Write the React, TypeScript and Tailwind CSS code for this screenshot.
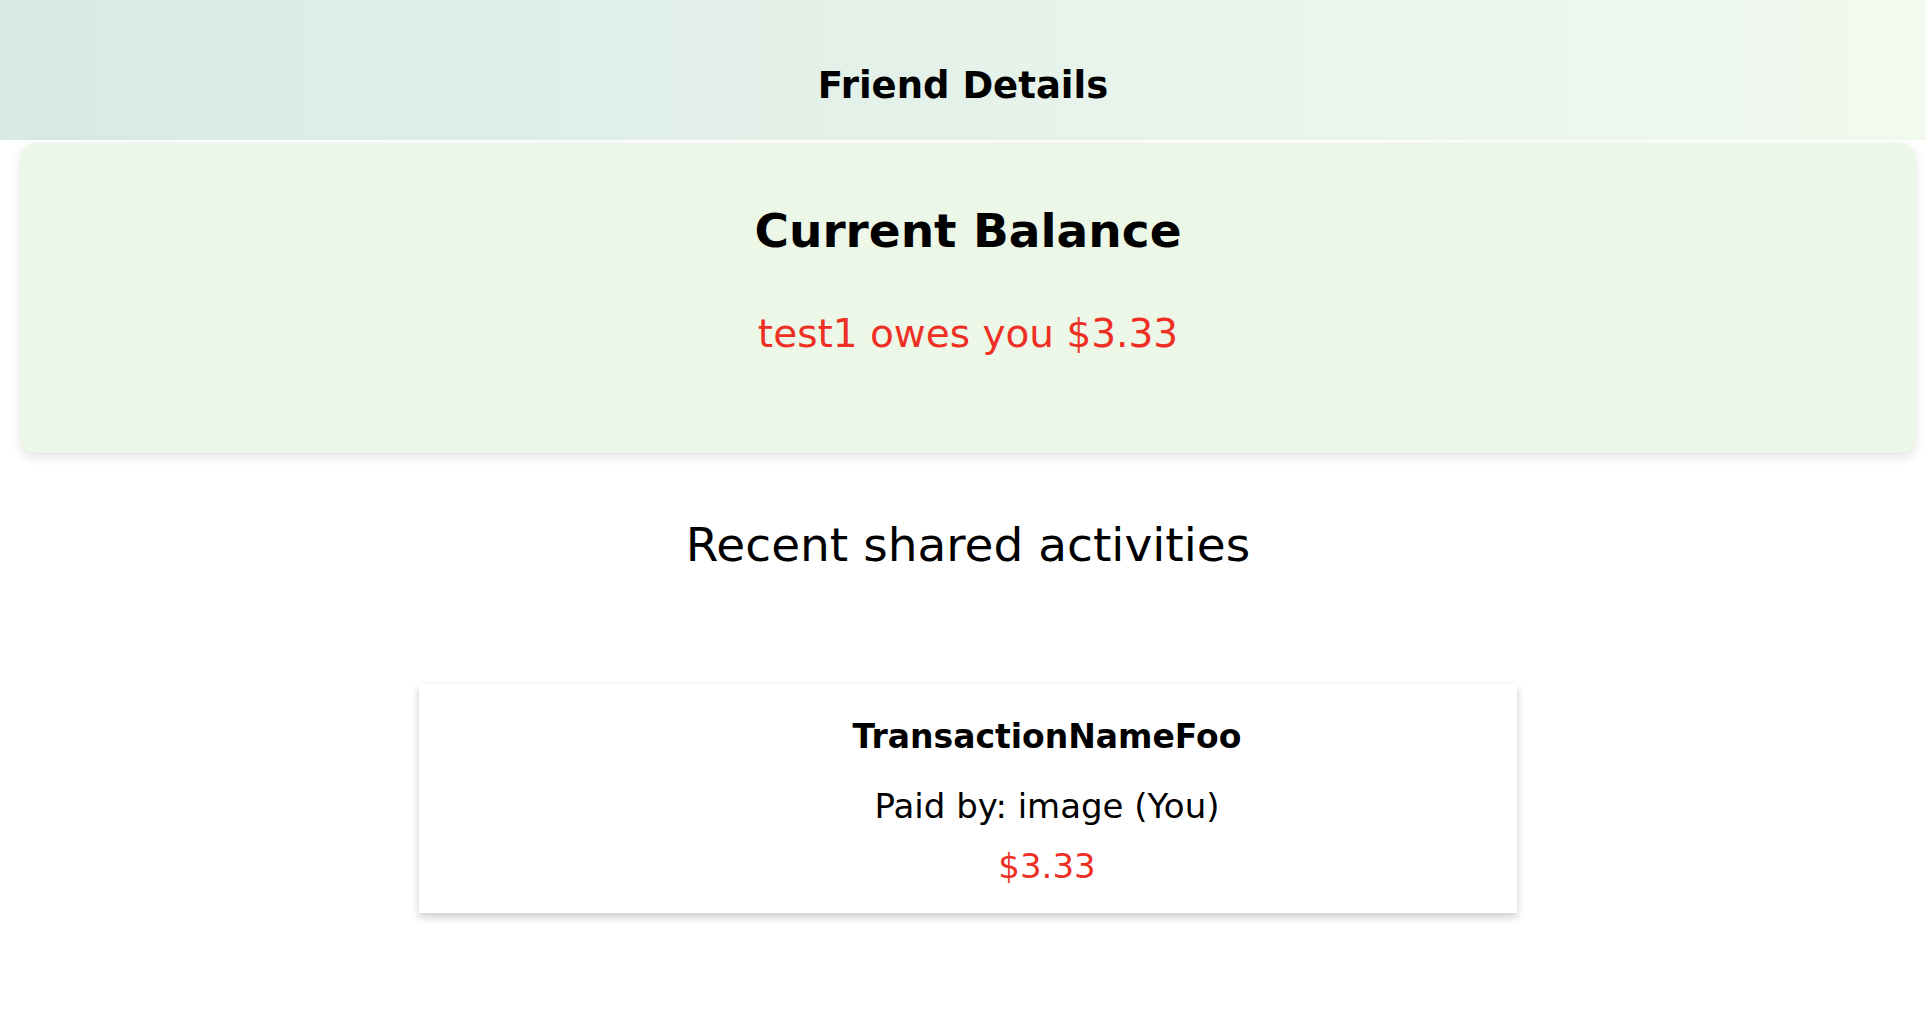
const font = { fontFamily: "'DejaVu Sans', 'Noto Sans', sans-serif" };

function Header() {
  return (
    <header className="flex h-[140px] items-center justify-center bg-gradient-to-r from-[#d8eae5] to-[#f2faef] pt-[30px]">
      <h1 className="text-[37px] font-bold leading-none text-black">Friend Details</h1>
    </header>
  );
}

function BalanceCard() {
  return (
    <section className="mx-[11px] mt-[3px] rounded-[14px] bg-[#edf7e7] pb-[100px] pt-[64px] text-center shadow-[0_4px_12px_rgba(0,0,0,0.12)]">
      <h2 className="text-[47px] font-bold leading-none text-black">Current Balance</h2>
      <p className="mt-[60px] text-[39px] leading-none text-[#ee3024]">
        test1 owes you $3.33
      </p>
    </section>
  );
}

function ActivityCard() {
  return (
    <div className="mx-auto w-[1098px] bg-white pb-[30px] pl-[158px] pt-[36px] text-center shadow-[0_4px_8px_0_rgba(0,0,0,0.2)]">
      <p className="text-[33px] font-bold leading-none text-black">TransactionNameFoo</p>
      <p className="mt-[36px] text-[34px] leading-none text-black">
        Paid by: image (You)
      </p>
      <p className="mt-[26px] text-[34px] leading-none text-[#ee3024]">$3.33</p>
    </div>
  );
}

export default function App() {
  return (
    <div className="min-h-screen bg-white" style={font}>
      <Header />
      <div className="pl-[10px]">
        <BalanceCard />
        <h3 className="mt-[68px] text-center text-[47px] leading-none text-black">
          Recent shared activities
        </h3>
        <div className="mt-[116px]">
          <ActivityCard />
        </div>
      </div>
    </div>
  );
}
